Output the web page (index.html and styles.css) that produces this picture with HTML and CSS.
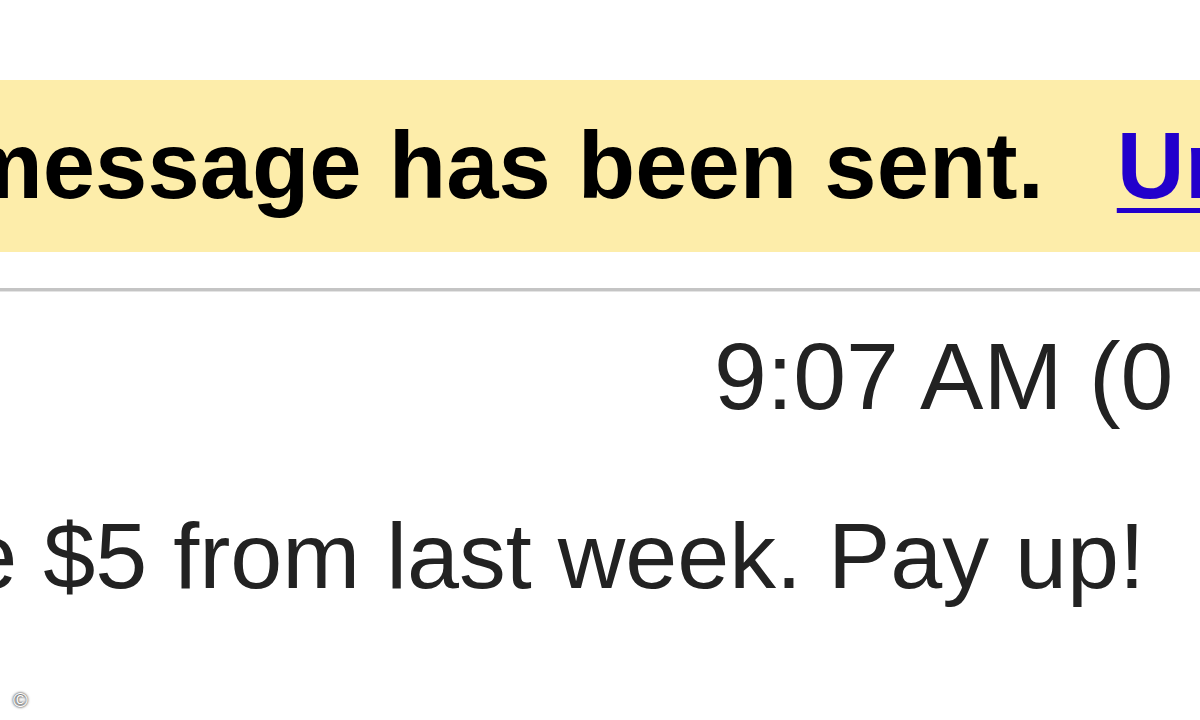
FILE: index.html
```html
<!DOCTYPE html>
<html lang="en">
<head>
  <meta charset="UTF-8">
  <title>Message sent</title>
  <link rel="stylesheet" href="styles.css">
</head>
<body>
  <div class="notice">
    <span class="notice-text">Your message has been sent.</span>
    <a class="undo" href="#">Undo</a>
  </div>

  <div class="divider"></div>

  <div class="msg-header">
    <span class="date">9:07 AM (0 minutes ago)</span>
  </div>

  <div class="msg-body">
    <span class="body-text">You owe $5 from last week. Pay up!</span>
  </div>

  <span class="credit">&copy;</span>
</body>
</html>
```

FILE: styles.css
```css
body {
  margin: 0;
  width: 1200px;
  height: 720px;
  overflow: hidden;
  position: relative;
  background: #ffffff;
  font-family: 'Liberation Sans', Arial, sans-serif;
  white-space: nowrap;
}

.notice {
  display: flex;
  margin-top: 80px;
  height: 172px;
  line-height: 172px;
  background-color: #fdedaa;
  font-size: 94px;
  font-weight: bold;
  color: #000;
}

.notice-text {
  margin-left: -275px;
  word-spacing: 1px;
}

.undo {
  margin-left: 73px;
  color: #2200cc;
  text-decoration: underline;
  text-decoration-thickness: 5px;
  text-underline-offset: 10px;
}

.divider {
  margin-top: 36px;
  height: 0;
  border-top: 3px solid #c4c4c4;
  box-shadow: 0 1px 0 #e4e4e4;
}

.msg-header {
  display: flex;
  padding-left: 714px;
  height: 170px;
  line-height: 170px;
  font-size: 95px;
  color: #222;
}

.msg-body {
  display: flex;
  margin-top: 38px;
  line-height: 114px;
  font-size: 93.5px;
  color: #222;
}

.body-text {
  margin-left: -338px;
}

.credit {
  position: absolute;
  left: 13px;
  bottom: 10px;
  font-size: 20px;
  line-height: 20px;
  color: #fff;
  text-shadow: 0 0 2px #333, 0 0 3px #555;
}
```
